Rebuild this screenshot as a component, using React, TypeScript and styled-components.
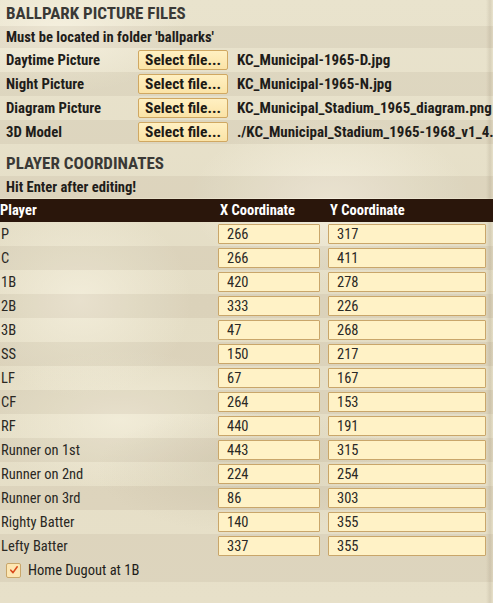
import * as React from 'react'
import styled, { createGlobalStyle } from 'styled-components'

const GlobalStyle = createGlobalStyle`
    html, body {
        margin: 0;
        padding: 0;
    }
    body {
        width: 493px;
        height: 603px;
        overflow: hidden;
        font-family: "Roboto Condensed", "Liberation Sans Narrow", "DejaVu Sans Condensed", Roboto, sans-serif;
        background-color: #e6dfc8;
        background-image:
            radial-gradient(ellipse 180px 90px at 60px 30px, rgba(246, 241, 224, 0.9), rgba(246, 241, 224, 0) 70%),
            radial-gradient(ellipse 200px 120px at 330px 200px, rgba(247, 242, 226, 0.8), rgba(247, 242, 226, 0) 70%),
            radial-gradient(ellipse 160px 140px at 80px 300px, rgba(245, 240, 222, 0.8), rgba(245, 240, 222, 0) 70%),
            radial-gradient(ellipse 220px 90px at 250px 470px, rgba(212, 204, 180, 0.6), rgba(212, 204, 180, 0) 70%),
            radial-gradient(ellipse 200px 100px at 120px 420px, rgba(244, 239, 220, 0.8), rgba(244, 239, 220, 0) 70%),
            linear-gradient(90deg, rgba(0, 0, 0, 0) 486px, rgba(120, 105, 80, 0.15) 490px, rgba(0, 0, 0, 0) 493px),
            linear-gradient(180deg, #e9e3cd 0%, #e4ddc5 50%, #e7e0c9 100%);
    }
`

const Page = styled.div`
    display: flex;
    flex-direction: column;
    width: 493px;
`

const SectionTitle = styled.div<{ $top?: number }>`
    height: 26px;
    margin-top: ${p => p.$top || 0}px;
    padding-left: 6px;
    display: flex;
    align-items: center;
    font-size: 17px;
    font-weight: 700;
    color: #3a3936;
`

const Note = styled.div`
    height: 22px;
    padding-left: 6px;
    display: flex;
    align-items: center;
    font-size: 14.6px;
    font-weight: 700;
    color: #1f1d1a;
    background: rgba(110, 95, 60, 0.08);
`

const FileRow = styled.div<{ $shade?: boolean }>`
    height: 24px;
    display: grid;
    grid-template-columns: 123px 90px 1fr;
    column-gap: 9px;
    align-items: center;
    padding-left: 6px;
    background: ${p => p.$shade ? 'rgba(110, 95, 60, 0.08)' : 'transparent'};
    font-size: 14.8px;
    font-weight: 700;
    color: #1f1d1a;
`

const Label = styled.span`
    white-space: nowrap;
`

const FileButton = styled.button`
    height: 20px;
    padding: 0;
    border: 1px solid #d0a862;
    border-radius: 2px;
    background: linear-gradient(180deg, #fff0c2 0%, #fbe3a6 100%);
    font-family: inherit;
    font-size: 15.5px;
    font-weight: 700;
    color: #1d1a15;
    cursor: pointer;
`

const FileName = styled.span`
    font-size: 15px;
    white-space: nowrap;
    overflow: hidden;
`

const TableHeader = styled.div`
    margin-top: 1px;
    height: 23px;
    display: grid;
    grid-template-columns: 210px 102px 158px;
    column-gap: 8px;
    align-items: center;
    background: #2a160b;
    color: #ffffff;
    font-size: 14.5px;
    font-weight: 700;
`

const HeadCell = styled.span<{ $indent?: number }>`
    padding-left: ${p => p.$indent || 0}px;
`

const TableRow = styled.div<{ $shade?: boolean }>`
    height: 24px;
    display: grid;
    grid-template-columns: 210px 102px 158px;
    column-gap: 8px;
    align-items: center;
    background: ${p => p.$shade ? 'rgba(110, 95, 60, 0.08)' : 'transparent'};
    font-size: 14.5px;
    color: #2a2824;
`

const PlayerName = styled.span`
    padding-left: 1px;
    white-space: nowrap;
`

const CoordInput = styled.input`
    box-sizing: border-box;
    height: 20px;
    width: 100%;
    margin: 0;
    padding: 0 0 0 8px;
    border: 1px solid #c9a66a;
    border-radius: 1px;
    background: #fff2c6;
    font-family: inherit;
    font-size: 14.5px;
    color: #2b2925;
    outline: none;
`

const CheckRow = styled.label`
    height: 24px;
    display: flex;
    align-items: center;
    gap: 7px;
    padding-left: 6px;
    background: rgba(110, 95, 60, 0.08);
    font-size: 14.5px;
    color: #1f1d1a;
`

const CheckBox = styled.span`
    box-sizing: border-box;
    width: 15px;
    height: 15px;
    border: 1px solid #c9a66a;
    border-radius: 2px;
    background: #fde6b2;
    display: flex;
    align-items: center;
    justify-content: center;
`

const files = [
    { label: 'Daytime Picture', file: 'KC_Municipal-1965-D.jpg' },
    { label: 'Night Picture', file: 'KC_Municipal-1965-N.jpg' },
    { label: 'Diagram Picture', file: 'KC_Municipal_Stadium_1965_diagram.png' },
    { label: '3D Model', file: './KC_Municipal_Stadium_1965-1968_v1_4.obj' },
]

const players = [
    ['P', 266, 317],
    ['C', 266, 411],
    ['1B', 420, 278],
    ['2B', 333, 226],
    ['3B', 47, 268],
    ['SS', 150, 217],
    ['LF', 67, 167],
    ['CF', 264, 153],
    ['RF', 440, 191],
    ['Runner on 1st', 443, 315],
    ['Runner on 2nd', 224, 254],
    ['Runner on 3rd', 86, 303],
    ['Righty Batter', 140, 355],
    ['Lefty Batter', 337, 355],
] as const

export default function App() {
    return <Page>
        <GlobalStyle />
        <SectionTitle>BALLPARK PICTURE FILES</SectionTitle>
        <Note>Must be located in folder 'ballparks'</Note>
        {files.map((f, i) =>
            <FileRow key={f.label} $shade={i % 2 === 1}>
                <Label>{f.label}</Label>
                <FileButton>Select file...</FileButton>
                <FileName>{f.file}</FileName>
            </FileRow>
        )}
        <SectionTitle $top={6}>PLAYER COORDINATES</SectionTitle>
        <Note>Hit Enter after editing!</Note>
        <TableHeader>
            <HeadCell>Player</HeadCell>
            <HeadCell $indent={2}>X Coordinate</HeadCell>
            <HeadCell $indent={2}>Y Coordinate</HeadCell>
        </TableHeader>
        {players.map(([name, x, y], i) =>
            <TableRow key={name} $shade={i % 2 === 1}>
                <PlayerName>{name}</PlayerName>
                <CoordInput defaultValue={x} />
                <CoordInput defaultValue={y} />
            </TableRow>
        )}
        <CheckRow>
            <CheckBox>
                <svg width="10" height="10" viewBox="0 0 10 10">
                    <path d="M1.8 5.2 L4 7.6 L8.2 1.8" fill="none" stroke="#d9491c" strokeWidth="1.6" strokeLinecap="round" strokeLinejoin="round" />
                </svg>
            </CheckBox>
            Home Dugout at 1B
        </CheckRow>
    </Page>
}
